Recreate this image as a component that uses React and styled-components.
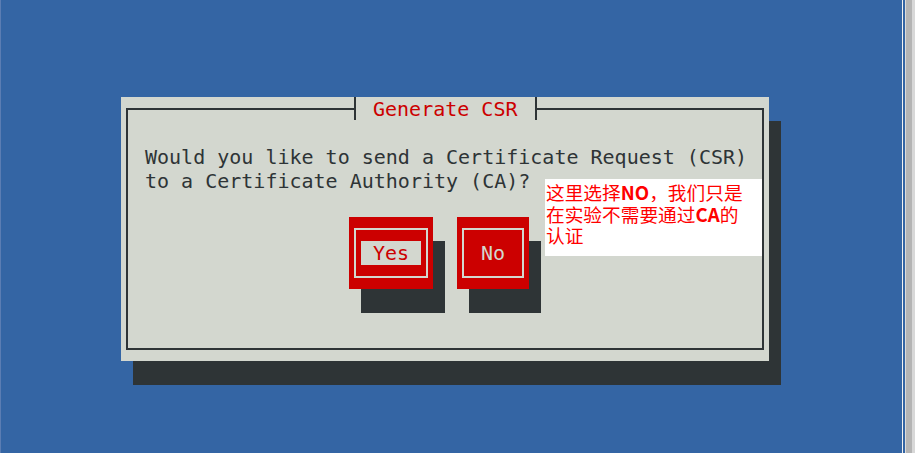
import React from "react";
import styled, { createGlobalStyle } from "styled-components";

const Global = createGlobalStyle`
  html, body { margin: 0; padding: 0; background: #3465a4; overflow: hidden; }
  * { box-sizing: border-box; }
`;

const Screen = styled.div`
  position: relative;
  display: flex;
  width: 915px;
  height: 453px;
  background: #3465a4;
`;

const EdgeLine = styled.div`
  width: ${(p) => p.$w}px;
  flex: none;
  background: ${(p) => p.$c};
`;

const Terminal = styled.div`
  flex: none;
  width: 901px;
  padding: 97px 0 0 120px;
  background: #3465a4;
`;

const Dialog = styled.div`
  display: flex;
  flex-direction: column;
  width: 648px;
  height: 264px;
  padding: 0 5px 11px;
  background: #d3d7cf;
  box-shadow: 12px 24px 0 #2e3436;
  font-family: "DejaVu Sans Mono", "Liberation Mono", monospace;
  font-size: 20px;
  line-height: 24px;
  color: #2e3436;
`;

const Frame = styled.fieldset`
  flex: 1;
  margin: 0;
  padding: 0;
  min-width: 0;
  border: 2px solid #2e3436;
`;

const Title = styled.legend`
  display: flex;
  align-items: flex-start;
  height: 24px;
  margin-left: 226px;
  padding: 0;
`;

const Tick = styled.span`
  width: 2px;
  height: 23px;
  background: #2e3436;
`;

const TitleText = styled.span`
  padding: 0 17px;
  color: #cc0000;
  white-space: pre;
`;

const Message = styled.p`
  width: max-content;
  margin: 24px 0 0 17px;
  white-space: pre;
`;

const ButtonRow = styled.div`
  display: flex;
  gap: 24px;
  margin-top: 24px;
  padding-left: 221px;
`;

const Button = styled.div`
  width: ${(p) => p.$w}px;
  height: 72px;
  padding: 11px 5px;
  background: #cc0000;
  box-shadow: 12px 24px 0 #2e3436;
`;

const ButtonFrame = styled.div`
  display: flex;
  align-items: center;
  justify-content: center;
  height: 50px;
  border: 2px solid #d3d7cf;
`;

const Label = styled.span`
  display: inline-flex;
  justify-content: center;
  width: ${(p) => (p.$focus ? "60px" : "auto")};
  height: 24px;
  background: ${(p) => (p.$focus ? "#d3d7cf" : "transparent")};
  color: ${(p) => (p.$focus ? "#cc0000" : "#d3d7cf")};
`;

const Note = styled.div`
  position: absolute;
  left: 545px;
  top: 179px;
  width: 217px;
  height: 77px;
  padding: 2px 0 0 1px;
  background: #ffffff;
  color: #ff0000;
  font-family: "Noto Sans CJK SC", "Noto Sans", sans-serif;
  font-size: 18.7px;
  line-height: 21.5px;
`;

const Latin = styled.span`
  font-weight: 700;
`;

export default function App() {
  return (
    <>
      <Global />
      <Screen>
        <EdgeLine $w={1} $c="#5b7db3" />
        <Terminal>
          <Dialog>
            <Frame>
              <Title>
                <Tick />
                <TitleText>Generate CSR</TitleText>
                <Tick />
              </Title>
              <Message>
                {"Would you like to send a Certificate Request (CSR)\nto a Certificate Authority (CA)?"}
              </Message>
              <ButtonRow>
                <Button $w={84}>
                  <ButtonFrame>
                    <Label $focus>Yes</Label>
                  </ButtonFrame>
                </Button>
                <Button $w={72}>
                  <ButtonFrame>
                    <Label>No</Label>
                  </ButtonFrame>
                </Button>
              </ButtonRow>
            </Frame>
          </Dialog>
        </Terminal>
        <EdgeLine $w={1} $c="#f2f2f2" />
        <EdgeLine $w={2} $c="#3465a4" />
        <EdgeLine $w={1} $c="#dcdcdc" />
        <EdgeLine $w={6} $c="#b4b4b4" />
        <EdgeLine $w={3} $c="#d8d8d8" />
        <Note>
          这里选择<Latin>NO</Latin>，我们只是
          <br />
          在实验不需要通过<Latin>CA</Latin>的
          <br />
          认证
        </Note>
      </Screen>
    </>
  );
}
